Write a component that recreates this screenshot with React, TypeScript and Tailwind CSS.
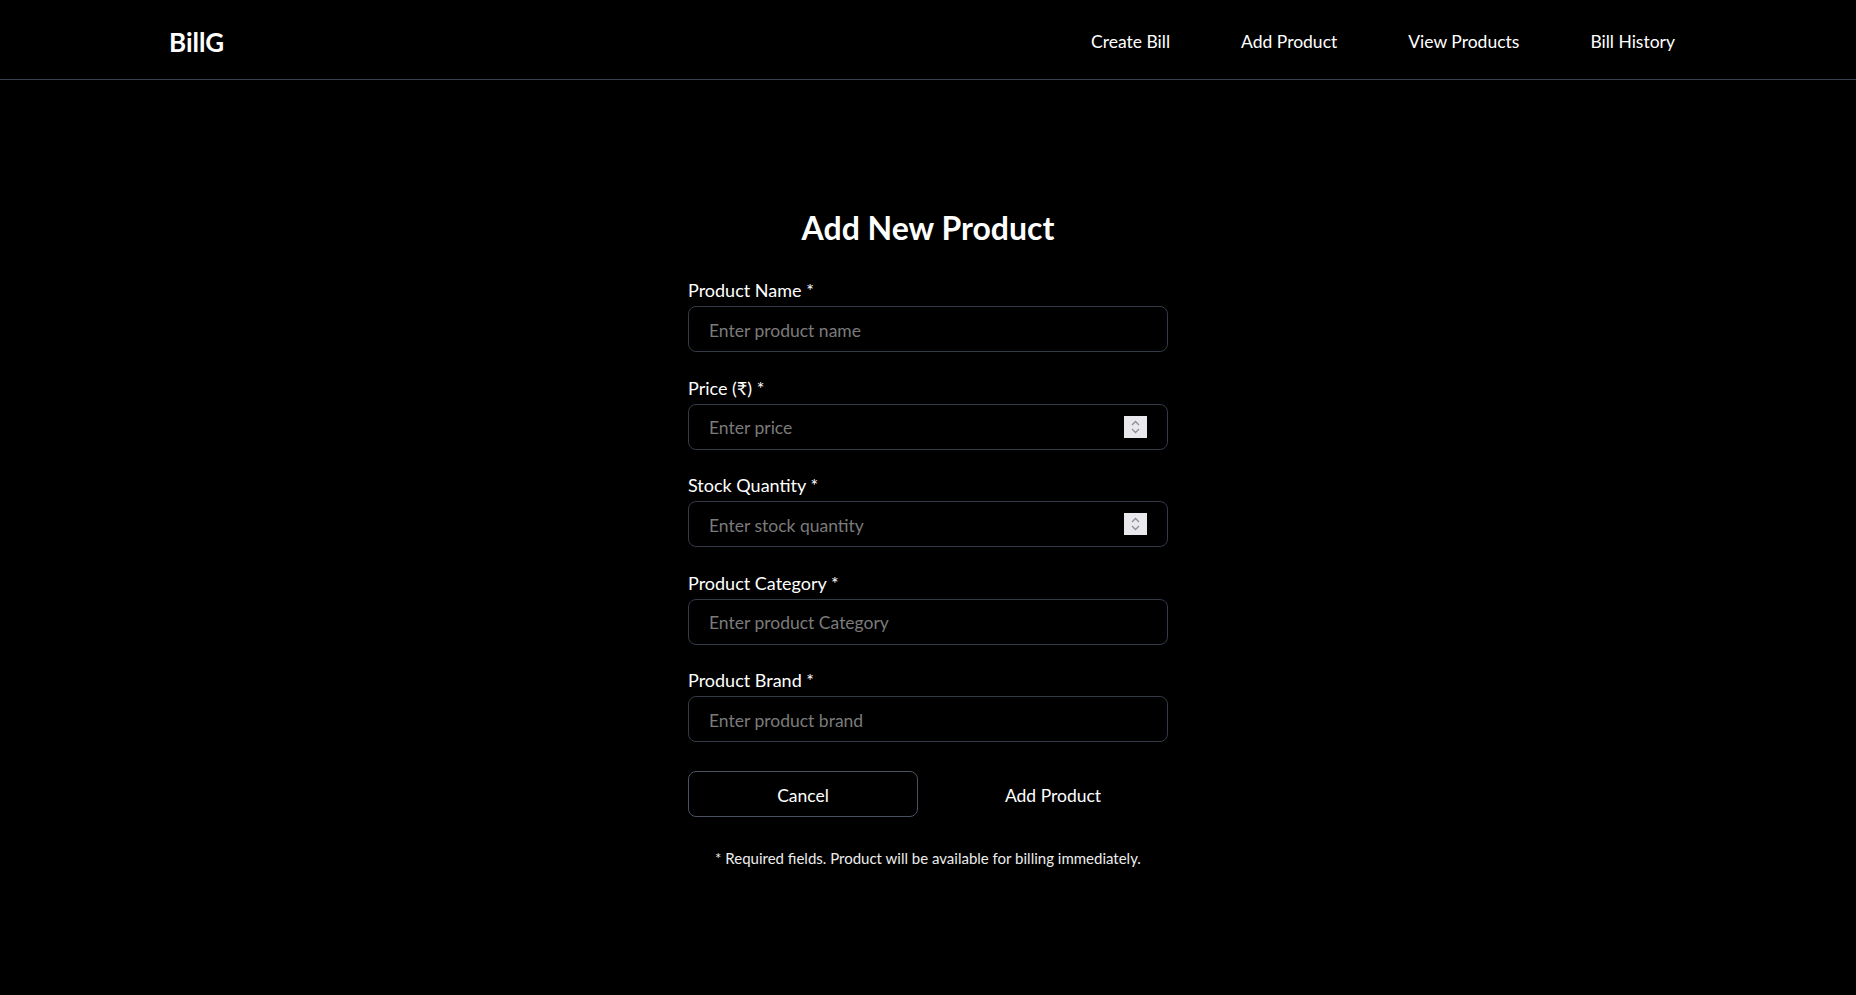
import { useState } from 'react';

const navLinks = ['Create Bill', 'Add Product', 'View Products', 'Bill History'];

function Spinner() {
  return (
    <div className="w-[23px] h-[22px] bg-[#e9e9ed] flex flex-col items-center justify-center shrink-0">
      <svg width="11" height="16" viewBox="0 0 11 16" fill="none" stroke="#8c8c9a" strokeWidth="1.3">
        <path d="M2 6 L5.5 2.5 L9 6" />
        <path d="M2 10 L5.5 13.5 L9 10" />
      </svg>
    </div>
  );
}

function Field({
  label,
  placeholder,
  value,
  onChange,
  numeric,
}: {
  label: string;
  placeholder: string;
  value: string;
  onChange: (v: string) => void;
  numeric?: boolean;
}) {
  return (
    <div className="flex flex-col">
      <label className="text-[18px] leading-6 text-white mb-1">{label}</label>
      <div className="h-[46px] rounded-lg border border-[#343a46] bg-black flex items-center pl-5 pr-5">
        <input
          type="text"
          inputMode={numeric ? 'numeric' : 'text'}
          value={value}
          onChange={(e) => onChange(e.target.value)}
          placeholder={placeholder}
          className="flex-1 bg-transparent outline-none text-white text-[17.5px] pt-[4px] placeholder:text-[#7b7b7b]"
        />
        {numeric && <Spinner />}
      </div>
    </div>
  );
}

export default function App() {
  const [form, setForm] = useState({ name: '', price: '', stock: '', category: '', brand: '' });

  const set = (key: keyof typeof form) => (v: string) => setForm({ ...form, [key]: v });

  return (
    <div className="min-h-screen bg-black text-white font-['Lato','Noto_Sans',sans-serif]">
      {/* Top bar */}
      <header className="h-[80px] border-b border-[#3a4150] flex items-center justify-between pl-[169px] pr-[181px] pt-[5px]">
        <span className="text-[26px] font-bold">BillG</span>
        <nav className="flex items-center gap-[71px] text-[17.5px]">
          {navLinks.map((l) => (
            <a key={l} href="#" className="text-white">
              {l}
            </a>
          ))}
        </nav>
      </header>

      <main className="flex flex-col items-center pt-[130px]">
        <h2 className="text-[32px] leading-9 font-bold mb-[32px]">Add New Product</h2>

        <form className="w-[480px] flex flex-col gap-[23.5px]" onSubmit={(e) => e.preventDefault()}>
          <Field label="Product Name *" placeholder="Enter product name" value={form.name} onChange={set('name')} />
          <Field label="Price (₹) *" placeholder="Enter price" value={form.price} onChange={set('price')} numeric />
          <Field label="Stock Quantity *" placeholder="Enter stock quantity" value={form.stock} onChange={set('stock')} numeric />
          <Field label="Product Category *" placeholder="Enter product Category" value={form.category} onChange={set('category')} />
          <Field label="Product Brand *" placeholder="Enter product brand" value={form.brand} onChange={set('brand')} />

          <div className="grid grid-cols-2 gap-5 mt-[5px]">
            <button type="button" className="h-[46px] rounded-lg border border-[#4a5261] text-[17.5px] pt-[5px]">
              Cancel
            </button>
            <button type="submit" className="h-[46px] rounded-lg text-[17.5px] pt-[5px]">
              Add Product
            </button>
          </div>
        </form>

        <p className="mt-[31px] text-[15px] leading-5 text-[#ececec]">
          * Required fields. Product will be available for billing immediately.
        </p>
      </main>
    </div>
  );
}
